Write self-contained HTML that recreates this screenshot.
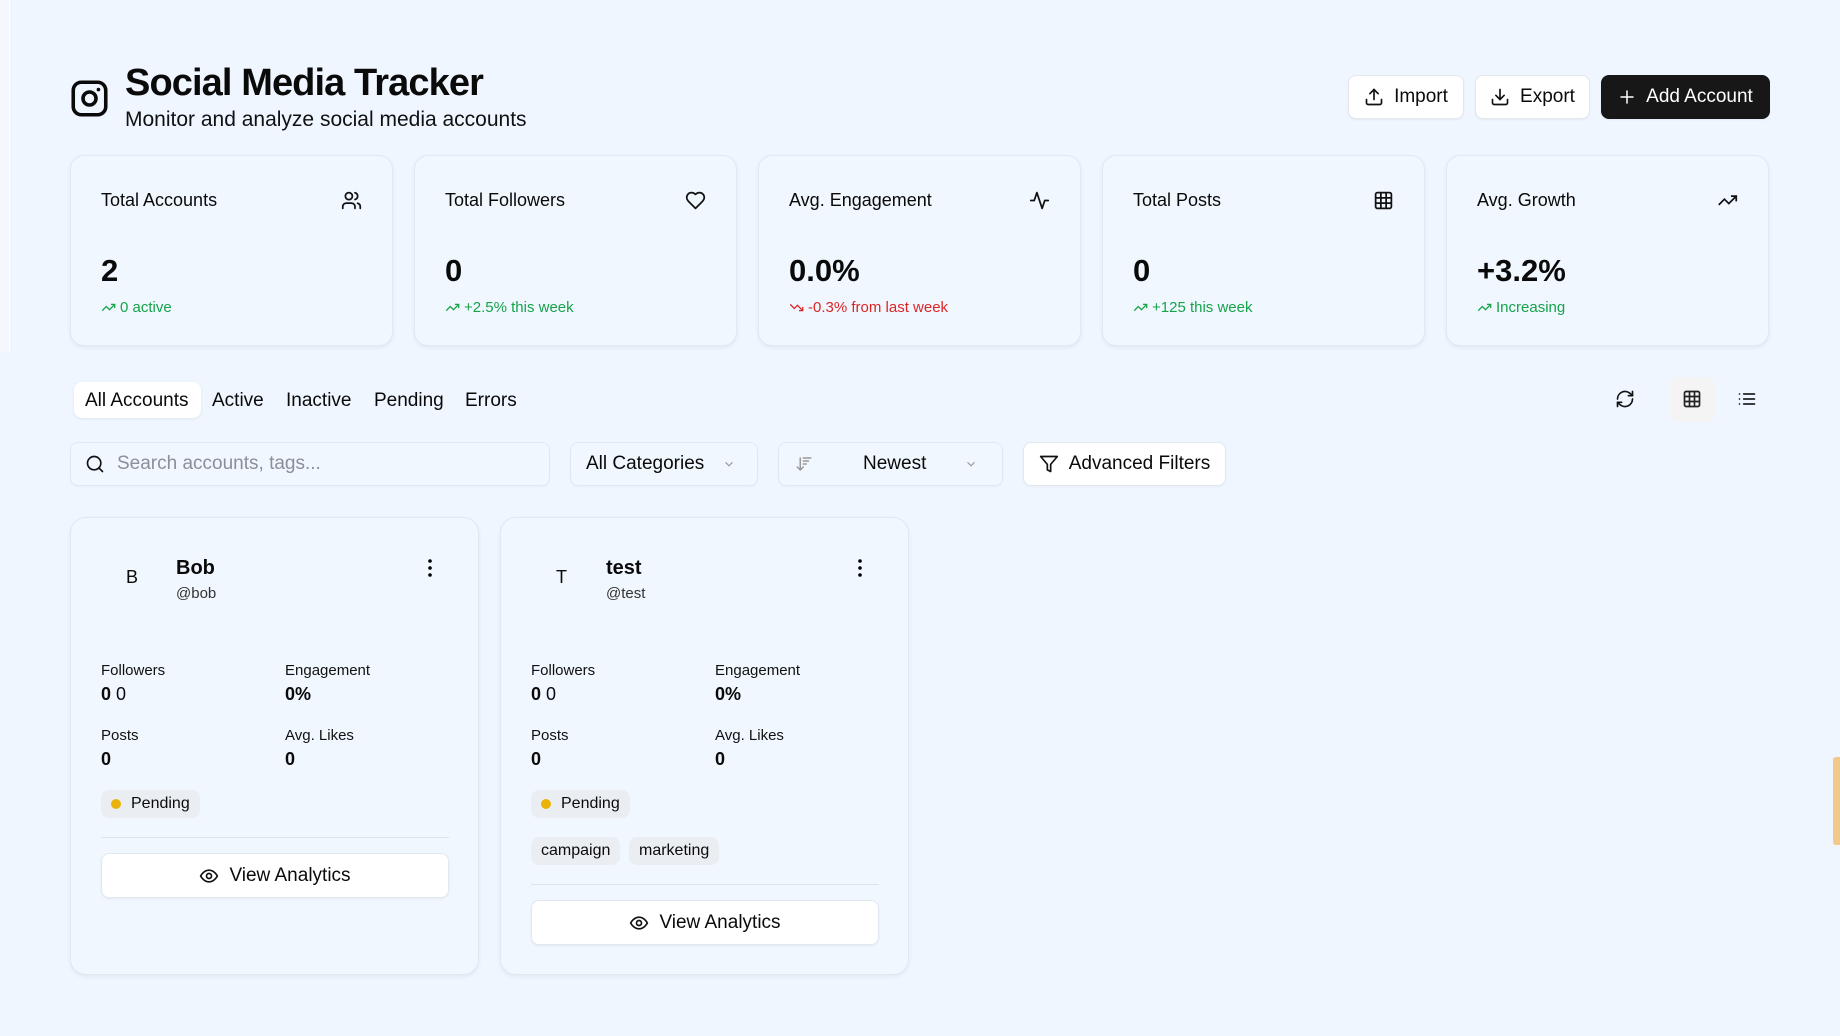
<!DOCTYPE html>
<html><head><meta charset="utf-8"><style>
*{box-sizing:border-box;margin:0;padding:0}
body{width:1840px;height:1036px;background:#eff6ff;font-family:"Liberation Sans",sans-serif;color:#0a0a0a;position:relative;overflow:hidden}
.a{position:absolute}
svg{display:block}
.btn{position:absolute;top:75px;height:44px;border-radius:8px;background:#fff;border:1px solid #e5e7eb;box-shadow:0 1px 2px rgba(0,0,0,.06);display:flex;align-items:center;justify-content:center;gap:10px;font-size:19px;font-weight:500}
.stat{position:absolute;top:155px;width:323px;height:191px;border:1px solid #e2e8f0;border-radius:14px;background:#f0f7ff;box-shadow:0 2px 4px rgba(0,0,0,.06)}
.stat .l{position:absolute;left:30px;top:34px;font-size:18px}
.stat .ic{position:absolute;right:30px;top:34px}
.stat .v{position:absolute;left:30px;top:97px;font-size:31px;font-weight:700}
.stat .s{position:absolute;left:30px;top:143px;font-size:15px;color:#16a34a;display:flex;align-items:center;gap:4px}
.tab{position:absolute;top:388px;font-size:19px;height:30px;line-height:30px}
.inp{position:absolute;top:442px;height:44px;border:1px solid #e2e8f0;border-radius:8px;background:#f0f7ff;box-shadow:0 1px 2px rgba(0,0,0,.04);display:flex;align-items:center;font-size:19px}
.card{position:absolute;top:517px;width:409px;height:458px;border:1px solid #e2e8f0;border-radius:16px;background:#f0f7ff;box-shadow:0 2px 4px rgba(0,0,0,.06)}
.card .av{position:absolute;left:55px;top:49px;font-size:18px;font-weight:500}
.card .nm{position:absolute;left:105px;top:39px;font-size:20px;font-weight:700}
.card .hd{position:absolute;left:105px;top:67px;font-size:15px;color:#333}
.card .dots{position:absolute;left:356px;top:40px}
.lb{position:absolute;font-size:15px;color:#111}
.vl{position:absolute;font-size:18px;font-weight:700}
.badge{position:absolute;left:30px;height:28px;border-radius:8px;background:#eaeef2;display:flex;align-items:center;padding:0 10px;font-size:16px;gap:10px}
.hr{position:absolute;left:30px;width:348px;height:1px;background:#dde3ea}
.va{position:absolute;left:30px;width:348px;height:45px;border:1px solid #e2e8f0;border-radius:8px;background:#fff;box-shadow:0 1px 2px rgba(0,0,0,.06);display:flex;align-items:center;justify-content:center;gap:10px;font-size:19px;font-weight:500}
</style></head><body>
<div class="a" style="left:9px;top:0;width:1px;height:352px;background:#fff"></div>
<div class="a" style="left:0;top:0;width:9px;height:352px;background:#f4f8fd"></div>

<svg class="a" style="left:70px;top:79px" width="39" height="39" viewBox="0 0 24 24" fill="none" stroke="#0a0a0a" stroke-width="2.2" stroke-linecap="round"><rect x="2" y="2" width="20" height="20" rx="5"/><circle cx="12" cy="12" r="4"/><line x1="17.5" y1="6.5" x2="17.5" y2="6.5"/></svg>
<div class="a" style="left:125px;top:62px;font-size:38px;font-weight:700;letter-spacing:-0.9px">Social Media Tracker</div>
<div class="a" style="left:125px;top:108px;font-size:21px;color:#111">Monitor and analyze social media accounts</div>

<div class="btn" style="left:1348px;width:116px"><svg width="20" height="20" viewBox="0 0 24 24" fill="none" stroke="#111" stroke-width="2" stroke-linecap="round" stroke-linejoin="round"><path d="M21 15v4a2 2 0 0 1-2 2H5a2 2 0 0 1-2-2v-4"/><path d="M17 8l-5-5-5 5"/><path d="M12 3v12"/></svg>Import</div>
<div class="btn" style="left:1475px;width:115px"><svg width="20" height="20" viewBox="0 0 24 24" fill="none" stroke="#111" stroke-width="2" stroke-linecap="round" stroke-linejoin="round"><path d="M21 15v4a2 2 0 0 1-2 2H5a2 2 0 0 1-2-2v-4"/><path d="M7 10l5 5 5-5"/><path d="M12 15V3"/></svg>Export</div>
<div class="btn" style="left:1601px;width:169px;background:#171717;color:#fff;border-color:#171717"><svg width="18" height="18" viewBox="0 0 24 24" fill="none" stroke="#fff" stroke-width="2" stroke-linecap="round"><path d="M12 4v16M4 12h16"/></svg>Add Account</div>

<div class="stat" style="left:70px"><div class="l">Total Accounts</div><svg class="ic" width="21" height="21" viewBox="0 0 24 24" fill="none" stroke="#111" stroke-width="2" stroke-linecap="round"><path d="M16 21v-2a4 4 0 0 0-4-4H6a4 4 0 0 0-4 4v2"/><circle cx="9" cy="7" r="4"/><path d="M22 21v-2a4 4 0 0 0-3-3.87"/><path d="M16 3.13a4 4 0 0 1 0 7.75"/></svg><div class="v">2</div><div class="s"><svg width="15" height="15" viewBox="0 0 24 24" fill="none" stroke="#16a34a" stroke-width="2"><path d="M22 7l-8.5 8.5-5-5L2 17"/><path d="M16 7h6v6"/></svg>0 active</div></div>
<div class="stat" style="left:414px"><div class="l">Total Followers</div><svg class="ic" width="21" height="21" viewBox="0 0 24 24" fill="none" stroke="#111" stroke-width="2" stroke-linejoin="round"><path d="M19 14c1.5-1.5 3-3.2 3-5.5A5.5 5.5 0 0 0 16.5 3c-1.8 0-3 .5-4.5 2-1.5-1.5-2.7-2-4.5-2A5.5 5.5 0 0 0 2 8.5c0 2.3 1.5 4 3 5.5l7 7z"/></svg><div class="v">0</div><div class="s"><svg width="15" height="15" viewBox="0 0 24 24" fill="none" stroke="#16a34a" stroke-width="2"><path d="M22 7l-8.5 8.5-5-5L2 17"/><path d="M16 7h6v6"/></svg>+2.5% this week</div></div>
<div class="stat" style="left:758px"><div class="l">Avg. Engagement</div><svg class="ic" width="21" height="21" viewBox="0 0 24 24" fill="none" stroke="#111" stroke-width="2" stroke-linecap="round" stroke-linejoin="round"><path d="M22 12h-4l-3 9L9 3l-3 9H2"/></svg><div class="v">0.0%</div><div class="s" style="color:#dc2626"><svg width="15" height="15" viewBox="0 0 24 24" fill="none" stroke="#dc2626" stroke-width="2"><path d="M22 17l-8.5-8.5-5 5L2 7"/><path d="M16 17h6v-6"/></svg>-0.3% from last week</div></div>
<div class="stat" style="left:1102px"><div class="l">Total Posts</div><svg class="ic" width="21" height="21" viewBox="0 0 24 24" fill="none" stroke="#111" stroke-width="2"><rect x="3" y="3" width="18" height="18" rx="2"/><path d="M3 9h18M3 15h18M9 3v18M15 3v18"/></svg><div class="v">0</div><div class="s"><svg width="15" height="15" viewBox="0 0 24 24" fill="none" stroke="#16a34a" stroke-width="2"><path d="M22 7l-8.5 8.5-5-5L2 17"/><path d="M16 7h6v6"/></svg>+125 this week</div></div>
<div class="stat" style="left:1446px"><div class="l">Avg. Growth</div><svg class="ic" width="21" height="21" viewBox="0 0 24 24" fill="none" stroke="#111" stroke-width="2"><path d="M22 7l-8.5 8.5-5-5L2 17"/><path d="M16 7h6v6"/></svg><div class="v">+3.2%</div><div class="s"><svg width="15" height="15" viewBox="0 0 24 24" fill="none" stroke="#16a34a" stroke-width="2"><path d="M22 7l-8.5 8.5-5-5L2 17"/><path d="M16 7h6v6"/></svg>Increasing</div></div>

<div class="a" style="left:74px;top:382px;width:127px;height:36px;background:#fff;border-radius:8px;box-shadow:0 1px 3px rgba(0,0,0,.08)"></div>
<div class="tab" style="left:85px;top:386px">All Accounts</div>
<div class="tab" style="left:212px;top:386px">Active</div>
<div class="tab" style="left:286px;top:386px">Inactive</div>
<div class="tab" style="left:374px;top:386px">Pending</div>
<div class="tab" style="left:465px;top:386px">Errors</div>

<svg class="a" style="left:1615px;top:389px" width="20" height="20" viewBox="0 0 24 24" fill="none" stroke="#111" stroke-width="2" stroke-linecap="round" stroke-linejoin="round"><path d="M3 12a9 9 0 0 1 15-6.7L21 8"/><path d="M21 3v5h-5"/><path d="M21 12a9 9 0 0 1-15 6.7L3 16"/><path d="M8 16H3v5"/></svg>
<div class="a" style="left:1670px;top:377px;width:45px;height:45px;border-radius:8px;background:#f4f4f5"></div>
<svg class="a" style="left:1682px;top:389px" width="20" height="20" viewBox="0 0 24 24" fill="none" stroke="#222" stroke-width="2"><rect x="3" y="3" width="18" height="18" rx="2"/><path d="M3 9h18M3 15h18M9 3v18M15 3v18"/></svg>
<svg class="a" style="left:1737px;top:389px" width="20" height="20" viewBox="0 0 24 24" fill="none" stroke="#222" stroke-width="2" stroke-linecap="round"><path d="M8 6h13M8 12h13M8 18h13M3 6h.01M3 12h.01M3 18h.01"/></svg>

<div class="inp" style="left:70px;width:480px;padding-left:14px;gap:12px;color:#8a8f98"><svg width="20" height="20" viewBox="0 0 24 24" fill="none" stroke="#111" stroke-width="2" stroke-linecap="round"><circle cx="11" cy="11" r="8"/><path d="M21 21l-4.3-4.3"/></svg>Search accounts, tags...</div>
<div class="inp" style="left:570px;width:188px;padding-left:15px">All Categories<svg style="margin-left:18px" width="14" height="14" viewBox="0 0 24 24" fill="none" stroke="#999" stroke-width="2"><path d="M6 9l6 6 6-6"/></svg></div>
<div class="inp" style="left:778px;width:225px;padding-left:16px"><svg width="18" height="18" viewBox="0 0 24 24" fill="none" stroke="#999" stroke-width="2" stroke-linecap="round"><path d="M3 16l4 4 4-4M7 20V4M11 4h10M11 8h7M11 12h4"/></svg><span style="margin-left:50px">Newest</span><svg style="margin-left:38px" width="14" height="14" viewBox="0 0 24 24" fill="none" stroke="#999" stroke-width="2"><path d="M6 9l6 6 6-6"/></svg></div>
<div class="inp" style="left:1023px;width:203px;background:#fff;justify-content:center;gap:10px;font-weight:500"><svg width="20" height="20" viewBox="0 0 24 24" fill="none" stroke="#111" stroke-width="2" stroke-linejoin="round"><path d="M22 3H2l8 9.46V19l4 2v-8.54z"/></svg>Advanced Filters</div>

<div class="card" style="left:70px">
<div class="av">B</div><div class="nm">Bob</div><div class="hd">@bob</div>
<svg class="dots" width="6" height="20" viewBox="0 0 6 20"><circle cx="3" cy="3" r="1.8"/><circle cx="3" cy="10" r="1.8"/><circle cx="3" cy="17" r="1.8"/></svg>
<div class="lb" style="left:30px;top:144px">Followers</div><div class="vl" style="left:30px;top:166px">0 <span style="font-weight:400">0</span></div>
<div class="lb" style="left:214px;top:144px">Engagement</div><div class="vl" style="left:214px;top:166px">0%</div>
<div class="lb" style="left:30px;top:209px">Posts</div><div class="vl" style="left:30px;top:231px">0</div>
<div class="lb" style="left:214px;top:209px">Avg. Likes</div><div class="vl" style="left:214px;top:231px">0</div>
<div class="badge" style="top:272px"><span style="width:10px;height:10px;border-radius:50%;background:#eab308"></span>Pending</div>
<div class="hr" style="top:319px"></div>
<div class="va" style="top:335px"><svg width="20" height="20" viewBox="0 0 24 24" fill="none" stroke="#111" stroke-width="2"><path d="M2 12s3.5-7 10-7 10 7 10 7-3.5 7-10 7S2 12 2 12z"/><circle cx="12" cy="12" r="3"/></svg>View Analytics</div>
</div>

<div class="card" style="left:500px">
<div class="av">T</div><div class="nm">test</div><div class="hd">@test</div>
<svg class="dots" width="6" height="20" viewBox="0 0 6 20"><circle cx="3" cy="3" r="1.8"/><circle cx="3" cy="10" r="1.8"/><circle cx="3" cy="17" r="1.8"/></svg>
<div class="lb" style="left:30px;top:144px">Followers</div><div class="vl" style="left:30px;top:166px">0 <span style="font-weight:400">0</span></div>
<div class="lb" style="left:214px;top:144px">Engagement</div><div class="vl" style="left:214px;top:166px">0%</div>
<div class="lb" style="left:30px;top:209px">Posts</div><div class="vl" style="left:30px;top:231px">0</div>
<div class="lb" style="left:214px;top:209px">Avg. Likes</div><div class="vl" style="left:214px;top:231px">0</div>
<div class="badge" style="top:272px"><span style="width:10px;height:10px;border-radius:50%;background:#eab308"></span>Pending</div>
<div class="badge" style="top:319px;gap:0">campaign</div>
<div class="badge" style="top:319px;left:128px">marketing</div>
<div class="hr" style="top:366px"></div>
<div class="va" style="top:382px"><svg width="20" height="20" viewBox="0 0 24 24" fill="none" stroke="#111" stroke-width="2"><path d="M2 12s3.5-7 10-7 10 7 10 7-3.5 7-10 7S2 12 2 12z"/><circle cx="12" cy="12" r="3"/></svg>View Analytics</div>
</div>

<div class="a" style="left:1833px;top:757px;width:7px;height:88px;background:#f2c98a;border-radius:3px 0 0 3px"></div>
</body></html>
